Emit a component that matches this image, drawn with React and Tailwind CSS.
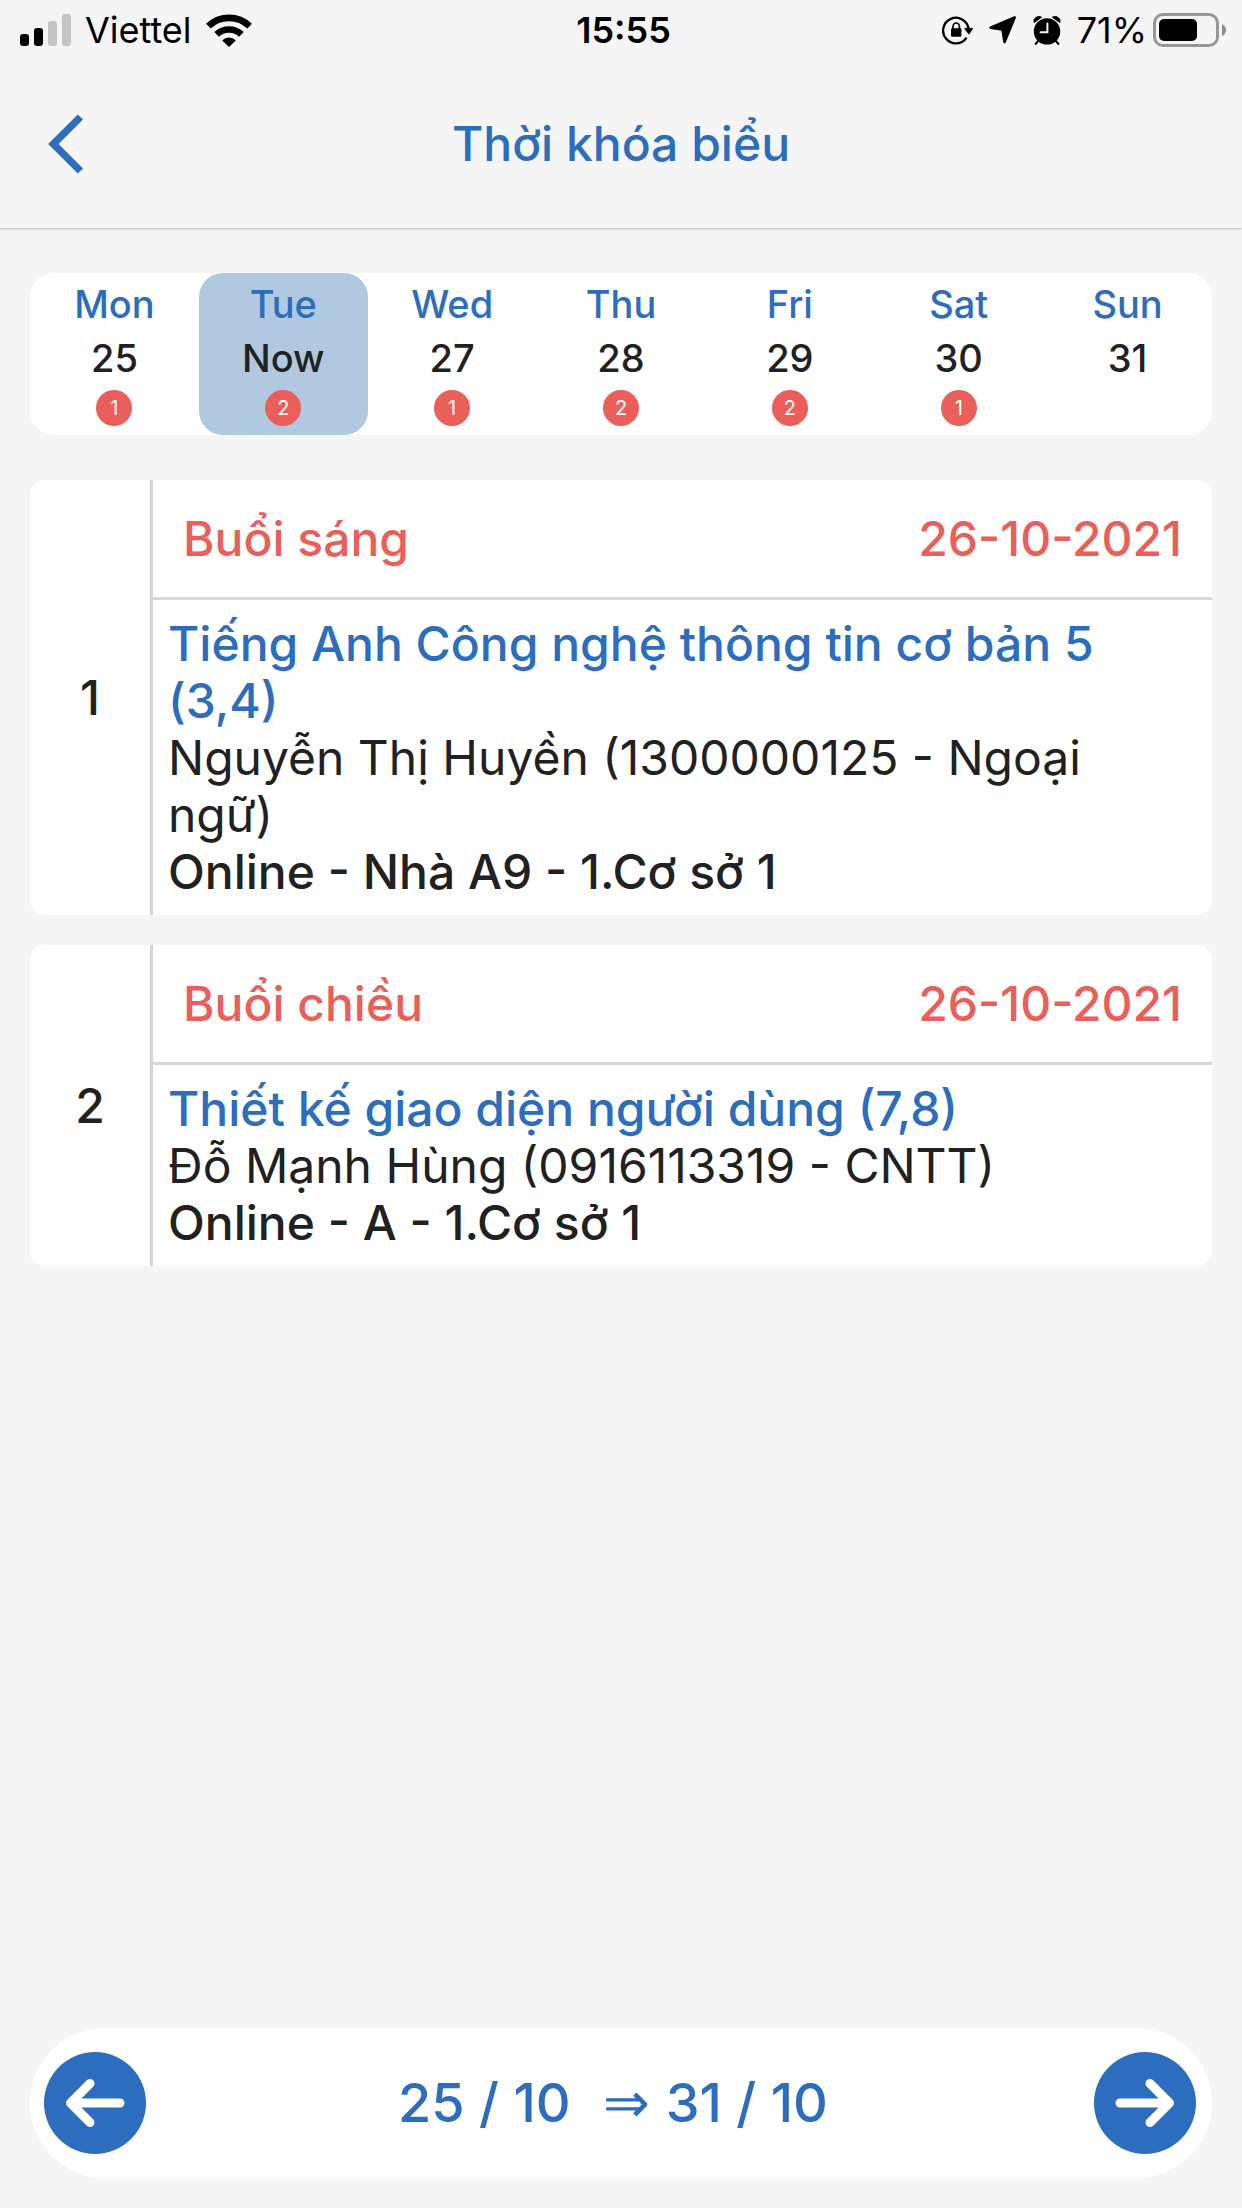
const days = [
  { name: 'Mon', date: '25', count: 1 },
  { name: 'Tue', date: 'Now', count: 2, selected: true },
  { name: 'Wed', date: '27', count: 1 },
  { name: 'Thu', date: '28', count: 2 },
  { name: 'Fri', date: '29', count: 2 },
  { name: 'Sat', date: '30', count: 1 },
  { name: 'Sun', date: '31', count: 0 },
];

const lessons = [
  {
    index: 1,
    session: 'Buổi sáng',
    date: '26-10-2021',
    subject: 'Tiếng Anh Công nghệ thông tin cơ bản 5 (3,4)',
    teacher: 'Nguyễn Thị Huyền (1300000125 - Ngoại ngữ)',
    place: 'Online - Nhà A9 - 1.Cơ sở 1',
  },
  {
    index: 2,
    session: 'Buổi chiều',
    date: '26-10-2021',
    subject: 'Thiết kế giao diện người dùng (7,8)',
    teacher: 'Đỗ Mạnh Hùng (0916113319 - CNTT)',
    place: 'Online - A - 1.Cơ sở 1',
  },
];

function SignalIcon() {
  return (
    <svg width="51" height="32" viewBox="0 0 51 32" aria-hidden="true">
      <rect x="0" y="20" width="9" height="12" rx="3" />
      <rect x="14" y="14" width="9" height="18" rx="3" />
      <rect x="28" y="7" width="9" height="25" rx="3" fill="#c4c4c4" />
      <rect x="42" y="0" width="9" height="32" rx="3" fill="#c4c4c4" />
    </svg>
  );
}

function WifiIcon() {
  return (
    <svg width="46" height="33" viewBox="0 0 46 33" aria-hidden="true">
      <g fill="none" stroke="#000" strokeWidth="6.6">
        <path d="M2.4 12.2A29.6 29.6 0 0 1 43.6 12.2" />
        <path d="M10.6 20.4A18 18 0 0 1 35.4 20.4" />
      </g>
      <path d="M23 33L16.2 26.4A9.6 9.6 0 0 1 29.8 26.4Z" />
    </svg>
  );
}

function RotationLockIcon() {
  return (
    <svg width="31" height="29" viewBox="0 0 31 29" aria-hidden="true">
      <path d="M24.6 21.6A12.8 12.8 0 1 1 26.6 13" fill="none" stroke="#000" strokeWidth="2.3" />
      <path d="M22.6 12.4L30.8 12.4L26.9 18.2Z" stroke="#000" strokeWidth="0.8" strokeLinejoin="round" />
      <rect x="9" y="12.2" width="10.4" height="8.6" rx="1.4" />
      <path d="M11 13V10.6A3.2 3.6 0 0 1 17.4 10.6V13" fill="none" stroke="#000" strokeWidth="1.7" />
    </svg>
  );
}

function LocationIcon() {
  return (
    <svg width="28" height="28" viewBox="0 0 28 28" aria-hidden="true">
      <path
        d="M25.6 1.4L1.6 11.6L13.4 13.4L15.6 26Z"
        stroke="#000"
        strokeWidth="2.6"
        strokeLinejoin="round"
      />
    </svg>
  );
}

function AlarmIcon() {
  return (
    <svg width="28" height="29" viewBox="0 0 28 29" aria-hidden="true">
      <circle cx="14" cy="15.4" r="13.2" />
      <path d="M1.2 6.6A5 4.6 0 0 1 8.6 1.2Z" stroke="#000" strokeLinejoin="round" />
      <path d="M26.8 6.6A5 4.6 0 0 0 19.4 1.2Z" stroke="#000" strokeLinejoin="round" />
      <path d="M5.4 24.6L2.8 27.8M22.6 24.6L25.2 27.8" stroke="#000" strokeWidth="2.2" strokeLinecap="round" />
      <path d="M14.4 7.6V16.2H7.6" fill="none" stroke="#f5f5f5" strokeWidth="2" strokeLinecap="round" />
    </svg>
  );
}

function BatteryIcon() {
  return (
    <svg width="74" height="34" viewBox="0 0 74 34" aria-hidden="true">
      <rect x="1.5" y="1.5" width="63" height="31" rx="8.5" fill="none" stroke="#979797" strokeWidth="3" />
      <rect x="6" y="6" width="38" height="22" rx="5" />
      <path d="M69 11Q73 13 73 17Q73 21 69 23Z" fill="#8c8c8c" />
    </svg>
  );
}

function StatusBar() {
  return (
    <div className="grid h-[60px] grid-cols-[1fr_auto_1fr] items-center pr-[15px] pl-5 text-[36px] leading-[60px] text-black">
      <div className="flex items-center gap-[14px]">
        <SignalIcon />
        <span>Viettel</span>
        <WifiIcon />
      </div>
      <div className="font-semibold">15:55</div>
      <div className="flex items-center justify-end gap-[6px]">
        <div className="flex items-center gap-4">
          <RotationLockIcon />
          <LocationIcon />
          <AlarmIcon />
          <span>71%</span>
        </div>
        <BatteryIcon />
      </div>
    </div>
  );
}

function Header() {
  return (
    <header className="bg-[#f5f5f5] shadow-[0_1px_2px_rgba(0,0,0,0.25)]">
      <StatusBar />
      <div className="grid h-[168px] grid-cols-[120px_1fr_120px] items-center">
        <button type="button" aria-label="Back" className="flex h-full items-center pl-12">
          <svg width="36" height="60" viewBox="0 0 36 60" aria-hidden="true">
            <path d="M32.4 3L5.4 30L32.4 57" fill="none" stroke="#2c6dbd" strokeWidth="7.4" />
          </svg>
        </button>
        <h1 className="text-center text-[48px] font-medium text-[#2c6dbd]">Thời khóa biểu</h1>
      </div>
    </header>
  );
}

function WeekStrip() {
  return (
    <div className="grid h-[162px] grid-cols-7 rounded-[24px] bg-white text-[38px] leading-[54px] text-[#212121]">
      {days.map((day) => (
        <button
          key={day.name}
          type="button"
          aria-pressed={Boolean(day.selected)}
          className={`flex flex-col items-center rounded-[24px] pt-1 ${day.selected ? 'bg-[#b1c9e0]' : ''}`}
        >
          <span className="font-medium text-[#2c6dbd]">{day.name}</span>
          <span className="font-medium">{day.date}</span>
          {day.count > 0 && (
            <span className="mt-[5px] flex size-9 items-center justify-center rounded-full bg-[#ea5f59] text-[20px] leading-9 text-white">
              {day.count}
            </span>
          )}
        </button>
      ))}
    </div>
  );
}

function LessonCard({ lesson }) {
  return (
    <article className="flex overflow-hidden rounded-[15px] bg-white text-[48px] leading-[57px] text-[#212121]">
      <div className="flex w-[120px] shrink-0 items-center justify-center font-medium">{lesson.index}</div>
      <div className="min-w-0 flex-1 border-l-3 border-[#d6d6d6]">
        <div className="flex h-[120px] items-center justify-between border-b-3 border-[#d6d6d6] px-[30px] font-medium text-[#ea5f59]">
          <span>{lesson.session}</span>
          <time>{lesson.date}</time>
        </div>
        <div className="py-[15px] pr-[30px] pl-[15px]">
          <h2 className="font-medium text-[#2c6dbd]">{lesson.subject}</h2>
          <p>{lesson.teacher}</p>
          <p className="font-medium">{lesson.place}</p>
        </div>
      </div>
    </article>
  );
}

function ArrowButton({ label, path }) {
  return (
    <button
      type="button"
      aria-label={label}
      className="flex size-[102px] items-center justify-center rounded-full bg-[#2c6dbd]"
    >
      <svg width="102" height="102" viewBox="0 0 102 102" aria-hidden="true">
        <path d={path} fill="none" stroke="#fff" strokeWidth="9" strokeLinecap="round" strokeLinejoin="round" />
      </svg>
    </button>
  );
}

function WeekPager() {
  return (
    <nav className="flex h-[150px] items-center justify-between rounded-full bg-white pr-4 pl-[14px]">
      <ArrowButton label="Previous week" path="M46 31.5L26.5 51L46 70.5M28 51H76" />
      <div className="flex items-baseline pr-[14px] text-[54px] leading-[66px] font-medium text-[#2c6dbd]">
        <span>25 / 10</span>
        <span className="pr-4 pl-8 font-['Liberation_Serif',serif] text-[56px]">⇒</span>
        <span>31 / 10</span>
      </div>
      <ArrowButton label="Next week" path="M56 31.5L75.5 51L56 70.5M74 51H26" />
    </nav>
  );
}

export default function App() {
  return (
    <div className="flex min-h-screen flex-col bg-[#f5f5f5] font-['Inter','Liberation_Sans',sans-serif]">
      <Header />
      <main className="flex flex-1 flex-col px-[30px] pt-[45px] pb-[30px]">
        <WeekStrip />
        <section className="mt-[45px] flex flex-col gap-[30px]">
          {lessons.map((lesson) => (
            <LessonCard key={lesson.index} lesson={lesson} />
          ))}
        </section>
        <div className="mt-auto pt-[30px]">
          <WeekPager />
        </div>
      </main>
    </div>
  );
}
